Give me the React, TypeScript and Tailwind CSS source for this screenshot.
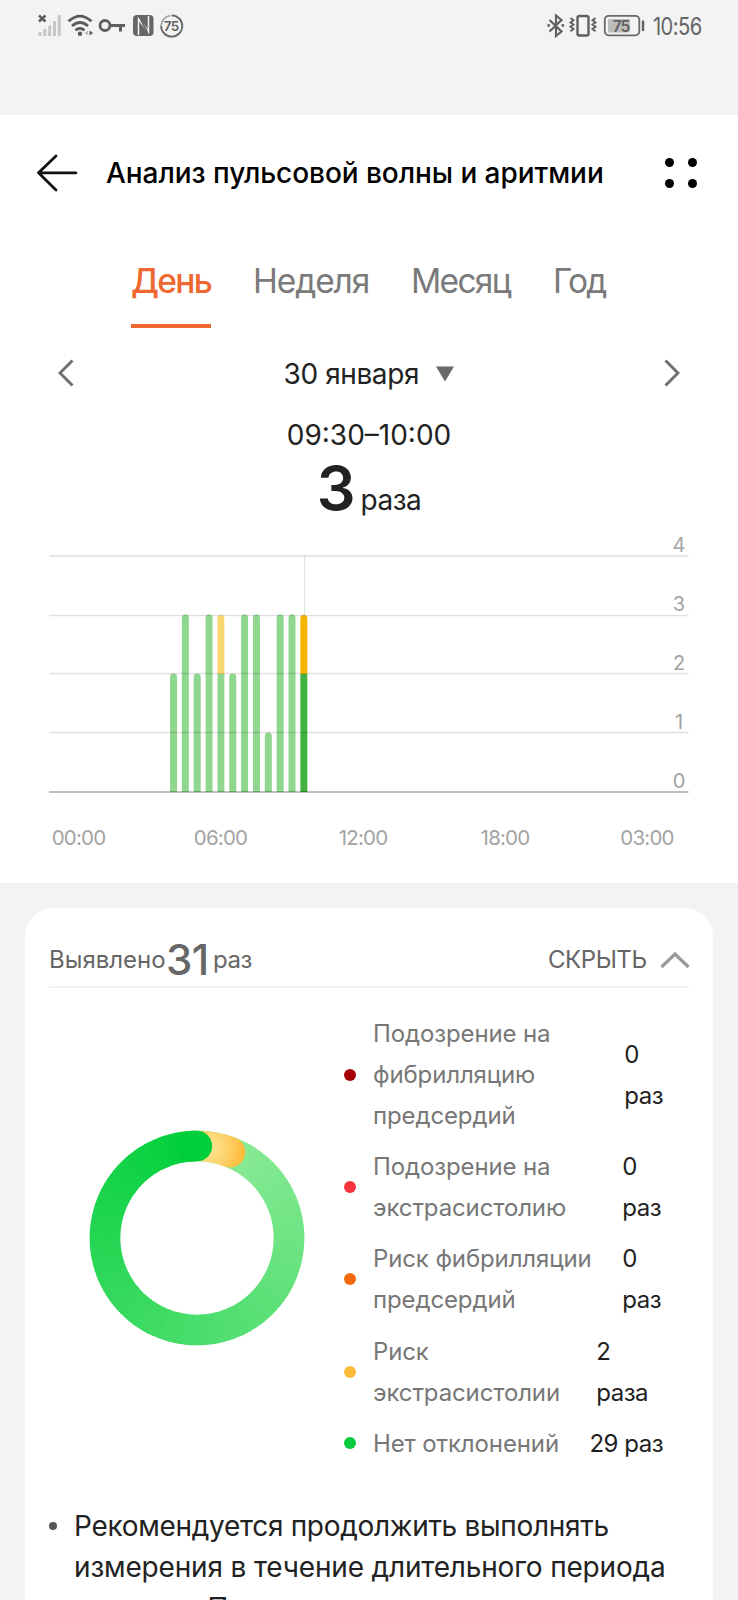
const GRID = [
  { label: '4', y: 32, text: 28 },
  { label: '3', y: 91.5, text: 87 },
  { label: '2', y: 149.5, text: 146 },
  { label: '1', y: 208.5, text: 205 },
  { label: '0', y: 268, text: 264 },
]

const HOURS = [
  { label: '00:00', x: 78.5 },
  { label: '06:00', x: 220.5 },
  { label: '12:00', x: 363 },
  { label: '18:00', x: 505 },
  { label: '03:00', x: 647 },
]

const BARS = [
  { normal: 2, risk: 0 },
  { normal: 3, risk: 0 },
  { normal: 2, risk: 0 },
  { normal: 3, risk: 0 },
  { normal: 2, risk: 1 },
  { normal: 2, risk: 0 },
  { normal: 3, risk: 0 },
  { normal: 3, risk: 0 },
  { normal: 1, risk: 0 },
  { normal: 3, risk: 0 },
  { normal: 3, risk: 0 },
  { normal: 2, risk: 1 },
]

const LEGEND = [
  { dot: 'bg-[#a50006]', lines: ['Подозрение на', 'фибрилляцию', 'предсердий'], value: ['0', 'раз'], pad: 'mr-[50px]' },
  { dot: 'bg-[#f7353f]', lines: ['Подозрение на', 'экстрасистолию'], value: ['0', 'раз'], pad: 'mr-[52px]' },
  { dot: 'bg-[#f26a0c]', lines: ['Риск фибрилляции', 'предсердий'], value: ['0', 'раз'], pad: 'mr-[52px]' },
  { dot: 'bg-[#fbbb38]', lines: ['Риск', 'экстрасистолии'], value: ['2', 'раза'], pad: 'mr-[65px]' },
  { dot: 'bg-[#08cc40]', lines: ['Нет отклонений'], value: ['29 раз'], pad: 'mr-[50px]' },
]

function StatusBar() {
  return (
    <div className="flex h-[115px] items-start justify-between pl-9 pr-[38px] pt-[10px] text-[#666]">
      <svg width="150" height="32" viewBox="36 10 150 32" fill="none">
        <g stroke="#5a5a5a" strokeWidth="2.4">
          <path d="M39 15.500l6.500 6M45.500 15.500l-6.500 6" />
        </g>
        <g fill="#c6c6c6">
          <rect x="38.500" y="32" width="3" height="4" />
          <rect x="43.300" y="29" width="3" height="7" />
          <rect x="48.200" y="25.500" width="3" height="10.500" />
          <rect x="53" y="21" width="3" height="15" />
          <rect x="57.800" y="15" width="3" height="21" />
        </g>
        <g stroke="#5a5a5a" strokeWidth="2.8">
          <path d="M68.500 21.300Q80 11 91.500 21.300" />
          <path d="M72 26Q80 19 88 26" />
          <path d="M75.500 30.300Q80 26.500 84.500 30.300" />
        </g>
        <circle cx="80" cy="33.800" r="2.200" fill="#5a5a5a" />
        <path d="M89.500 30.500v5l3.500-2.500z" fill="#5a5a5a" />
        <path d="M88 30.500v5l-3.500-2.500z" fill="#bbb" />
        <circle cx="105" cy="25.500" r="5" stroke="#5f5f5f" strokeWidth="2.800" />
        <path d="M110 25.500h15M120.500 25.500v6" stroke="#5f5f5f" strokeWidth="3" />
        <rect x="133" y="15" width="20.500" height="21" rx="4" fill="#666" />
        <path d="M138.500 35V19l9.500 13.500" stroke="#f3f3f3" strokeWidth="1.500" />
        <path d="M148.500 16v16l-9-13.500" stroke="#f3f3f3" strokeWidth="1.500" />
        <path d="M140 17.500L147.500 33" stroke="#666" strokeWidth="1.800" />
        <circle cx="171.700" cy="26" r="10.600" stroke="#666" strokeWidth="1.800" strokeDasharray="50 16.600" transform="rotate(-90 171.700 26)" />
        <path d="M161.200 25a10.600 10.600 0 0 1 9-9.500" stroke="#999" strokeWidth="1.600" />
        <text x="171.300" y="30.800" textAnchor="middle" fontSize="13.500" fontWeight="600" letterSpacing="-0.500" fill="#5f5f5f">75</text>
      </svg>
      <div className="flex">
        <svg width="104" height="32" viewBox="544 10 104 32" fill="none">
          <g stroke="#606060" strokeWidth="2.200">
            <path d="M549.500 20l12 11.500-5.500 4.500V15.500l5.500 4.500-12 11.500" />
          </g>
          <circle cx="548.700" cy="25.500" r="1.400" fill="#606060" />
          <circle cx="562.800" cy="25.500" r="1.400" fill="#606060" />
          <rect x="577.500" y="16" width="11" height="19.500" rx="2" stroke="#606060" strokeWidth="2.400" />
          <path d="M570.500 18l3 2.200-3 2.200 3 2.200-3 2.200 3 2.200-3 2.200M595.500 18l-3 2.200 3 2.200-3 2.200 3 2.200-3 2.200 3 2.200" stroke="#606060" strokeWidth="1.900" />
          <rect x="604.800" y="15.800" width="34.500" height="19.500" rx="4" stroke="#6a6a6a" strokeWidth="1.800" />
          <rect x="608" y="19" width="22" height="13.500" rx="1" fill="#bdbdbd" />
          <path d="M643 20.500v10.500" stroke="#606060" strokeWidth="2.400" />
          <text x="621" y="31.500" textAnchor="middle" fontSize="15.500" fontWeight="600" letterSpacing="-1" fill="#606060">75</text>
        </svg>
        <span className="ml-[5px] w-[47px] origin-left scale-x-[0.840] whitespace-nowrap text-[24px] leading-[34px] tracking-[-0.700px]">10:56</span>
      </div>
    </div>
  )
}

function Header() {
  return (
    <div className="flex h-[115px] items-center pl-9">
      <svg width="42" height="40" viewBox="0 0 42 40" fill="none" stroke="#111" strokeWidth="2.800" strokeLinecap="round" strokeLinejoin="round">
        <path d="M20 3L2.500 19.800 20 37M2.500 19.800H40" />
      </svg>
      <h1 className="ml-[28px] w-[521px] whitespace-nowrap text-[28px] font-medium tracking-[-0.060px] text-black">
        Анализ пульсовой волны и аритмии
      </h1>
      <div className="ml-[38px] grid grid-cols-2 gap-x-[14px] gap-y-3">
        <i className="size-[9px] rounded-full bg-black" />
        <i className="size-[9px] rounded-full bg-black" />
        <i className="size-[9px] rounded-full bg-black" />
        <i className="size-[9px] rounded-full bg-black" />
      </div>
    </div>
  )
}

function Tabs() {
  return (
    <div className="flex h-[98px] whitespace-nowrap pl-[131px] pt-[26px] text-[33.500px] leading-[50px] text-[#7a7a7a]">
      <div className="w-20 text-[#ee6830]">
        <div className="font-medium tracking-[-1.700px]">День</div>
        <div className="mt-[18px] h-1 bg-[#ee6830]" />
      </div>
      <div className="ml-[42px] w-[117px] tracking-[-1.100px]">Неделя</div>
      <div className="ml-[41px] w-[101px] tracking-[-1.700px]">Месяц</div>
      <div className="ml-[41px] tracking-[-1.800px]">Год</div>
    </div>
  )
}

function PulseChart() {
  const unit = 59
  return (
    <svg className="block" width="738" height="359" viewBox="0 0 738 359">
      <path d="M304.500 32v60" stroke="#e2e2e2" />
      {BARS.map((bar, i) => {
        const x = 170 + i * 11.85
        const active = i === BARS.length - 1
        const top = 268 - bar.normal * unit
        return (
          <g key={i}>
            {bar.risk > 0 && (
              <path d={`M${x} ${top}V94.500a3.500 3.500 0 0 1 7 0V${top}z`} fill={active ? '#f5b400' : '#fbd671'} />
            )}
            {bar.risk > 0 ? (
              <rect x={x} y={top} width="7" height={268 - top} fill={active ? '#3fb23f' : '#8fd68f'} />
            ) : (
              <path d={`M${x} 268V${top + 3}a3.500 3.500 0 0 1 7 0V268z`} fill="#8fd68f" />
            )}
          </g>
        )
      })}
      {GRID.map((line, i) => (
        <g key={line.label}>
          <path
            d={`M49 ${line.y}H688.500`}
            stroke="#000"
            strokeOpacity={i === 4 ? 0.25 : 0.12}
            strokeWidth={i === 4 ? 2 : 1.5}
          />
          <text x="679" y={line.text} textAnchor="middle" fontSize="20" fill="#a3a3a3">
            {line.label}
          </text>
        </g>
      ))}
      {HOURS.map((hour) => (
        <text key={hour.label} x={hour.x} y="321" textAnchor="middle" fontSize="20.500" letterSpacing="-0.800" fill="#a3a3a3">
          {hour.label}
        </text>
      ))}
    </svg>
  )
}

function mix(t: number) {
  const from = [146, 235, 155]
  const to = [0, 207, 58]
  return `rgb(${from.map((c, i) => Math.round(c + (to[i] - c) * t)).join(',')})`
}

function point(deg: number) {
  const a = ((deg - 90) * Math.PI) / 180
  return `${110 + 92 * Math.cos(a)} ${110 + 92 * Math.sin(a)}`
}

function Donut() {
  const steps = Array.from({ length: 120 }, (_, i) => i)
  return (
    <svg className="ml-[62px] mt-[140px] shrink-0" width="220" height="220" viewBox="0 0 220 220" fill="none" strokeWidth="30.700">
      <defs>
        <radialGradient id="risk" gradientUnits="userSpaceOnUse" cx="122" cy="20" r="40">
          <stop offset="0.1" stopColor="#ffe38c" />
          <stop offset="0.5" stopColor="#fdd068" />
          <stop offset="1" stopColor="#ffb42c" />
        </radialGradient>
      </defs>
      {steps.map((i) => (
        <path key={i} d={`M${point(i * 3)}A92 92 0 0 1 ${point(Math.min(i * 3 + 3.6, 360))}`} stroke={mix(i / 120)} />
      ))}
      <path d={`M${point(0)}A92 92 0 0 1 ${point(21)}`} stroke="url(#risk)" strokeLinecap="round" />
      <path d={`M${point(356)}A92 92 0 0 1 ${point(359.9)}`} stroke="#00cf3a" strokeLinecap="round" />
    </svg>
  )
}

function Legend() {
  return (
    <div className="ml-[37px] flex grow flex-col gap-[10.200px] pt-[25px] text-[24px] leading-[41px]">
      {LEGEND.map((row) => (
        <div key={row.lines.join()} className="flex items-center whitespace-nowrap">
          <i className={`size-3 shrink-0 rounded-full ${row.dot}`} />
          <div className="ml-[17px] grow tracking-[-0.120px] text-[#777]">
            {row.lines.map((line) => (
              <div key={line}>{line}</div>
            ))}
          </div>
          <div className={`tracking-[-0.500px] text-[#1f1f1f] ${row.pad}`}>
            {row.value.map((line) => (
              <div key={line}>{line}</div>
            ))}
          </div>
        </div>
      ))}
    </div>
  )
}

export default function App() {
  return (
    <div className="h-[1600px] w-[738px] overflow-hidden bg-[#f3f3f3] font-['Inter','Noto_Sans',sans-serif]">
      <StatusBar />
      <main className="h-[768px] bg-white">
        <Header />
        <Tabs />
        <div className="flex h-[90px] items-center justify-between px-[58px] text-[#222]">
          <svg width="16" height="28" viewBox="0 0 16 28" fill="none" stroke="#707070" strokeWidth="3">
            <path d="M14.500 1.500L2 14l12.500 12.500" />
          </svg>
          <div className="flex items-center pt-[2px]">
            <span className="w-[151px] whitespace-nowrap text-[28px] tracking-[-0.400px]">30 января</span>
            <svg width="20" height="16" viewBox="0 0 20 16" fill="#6b6b6b">
              <path d="M1 0.500h18L10 15.500z" />
            </svg>
          </div>
          <svg width="16" height="28" viewBox="0 0 16 28" fill="none" stroke="#707070" strokeWidth="3">
            <path d="M1.500 1.500L14 14 1.500 26.500" />
          </svg>
        </div>
        <div className="text-center text-[28px] leading-[34px] text-[#222]">09:30–10:00</div>
        <div className="flex h-[72px] items-baseline justify-center gap-[8px] text-[#222]">
          <span className="text-[61px] font-semibold leading-[73px] tracking-[-3px]">3</span>
          <span className="text-[28px] tracking-[-0.500px]">раза</span>
        </div>
        <PulseChart />
      </main>
      <section className="mx-[25px] mt-[25px] h-[720px] rounded-t-[28px] bg-white">
        <div className="mx-6 flex h-[80px] items-center border-b-2 border-[#f2f2f2] pt-[25px] text-[24px] text-[#666]">
          <div className="flex grow items-center whitespace-nowrap leading-[50px]">
            <span className="w-[117px]">Выявлено</span>
            <span className="w-[47px] text-[42px] font-medium tracking-[-0.500px]">31</span>
            <span className="tracking-[-0.500px]">раз</span>
          </div>
          <span className="w-[112px] tracking-[-0.450px]">СКРЫТЬ</span>
          <svg className="-mr-px" width="30" height="18" viewBox="0 0 30 18" fill="none" stroke="#999" strokeWidth="3.200">
            <path d="M1.500 16L15 3l13.500 13" />
          </svg>
        </div>
        <div className="flex">
          <Donut />
          <Legend />
        </div>
        <ul className="pl-6 pt-[42px] text-[28px] leading-[41px] text-[#222]">
          <li className="flex items-start whitespace-nowrap tracking-[-0.300px]">
            <i className="mt-4 size-2 shrink-0 rounded-full bg-[#555]" />
            <div className="ml-[17px]">
              Рекомендуется продолжить выполнять
              <br />
              <span className="tracking-[-0.170px]">измерения в течение длительного периода</span>
              <br />
              времени. При
            </div>
          </li>
        </ul>
      </section>
    </div>
  )
}
